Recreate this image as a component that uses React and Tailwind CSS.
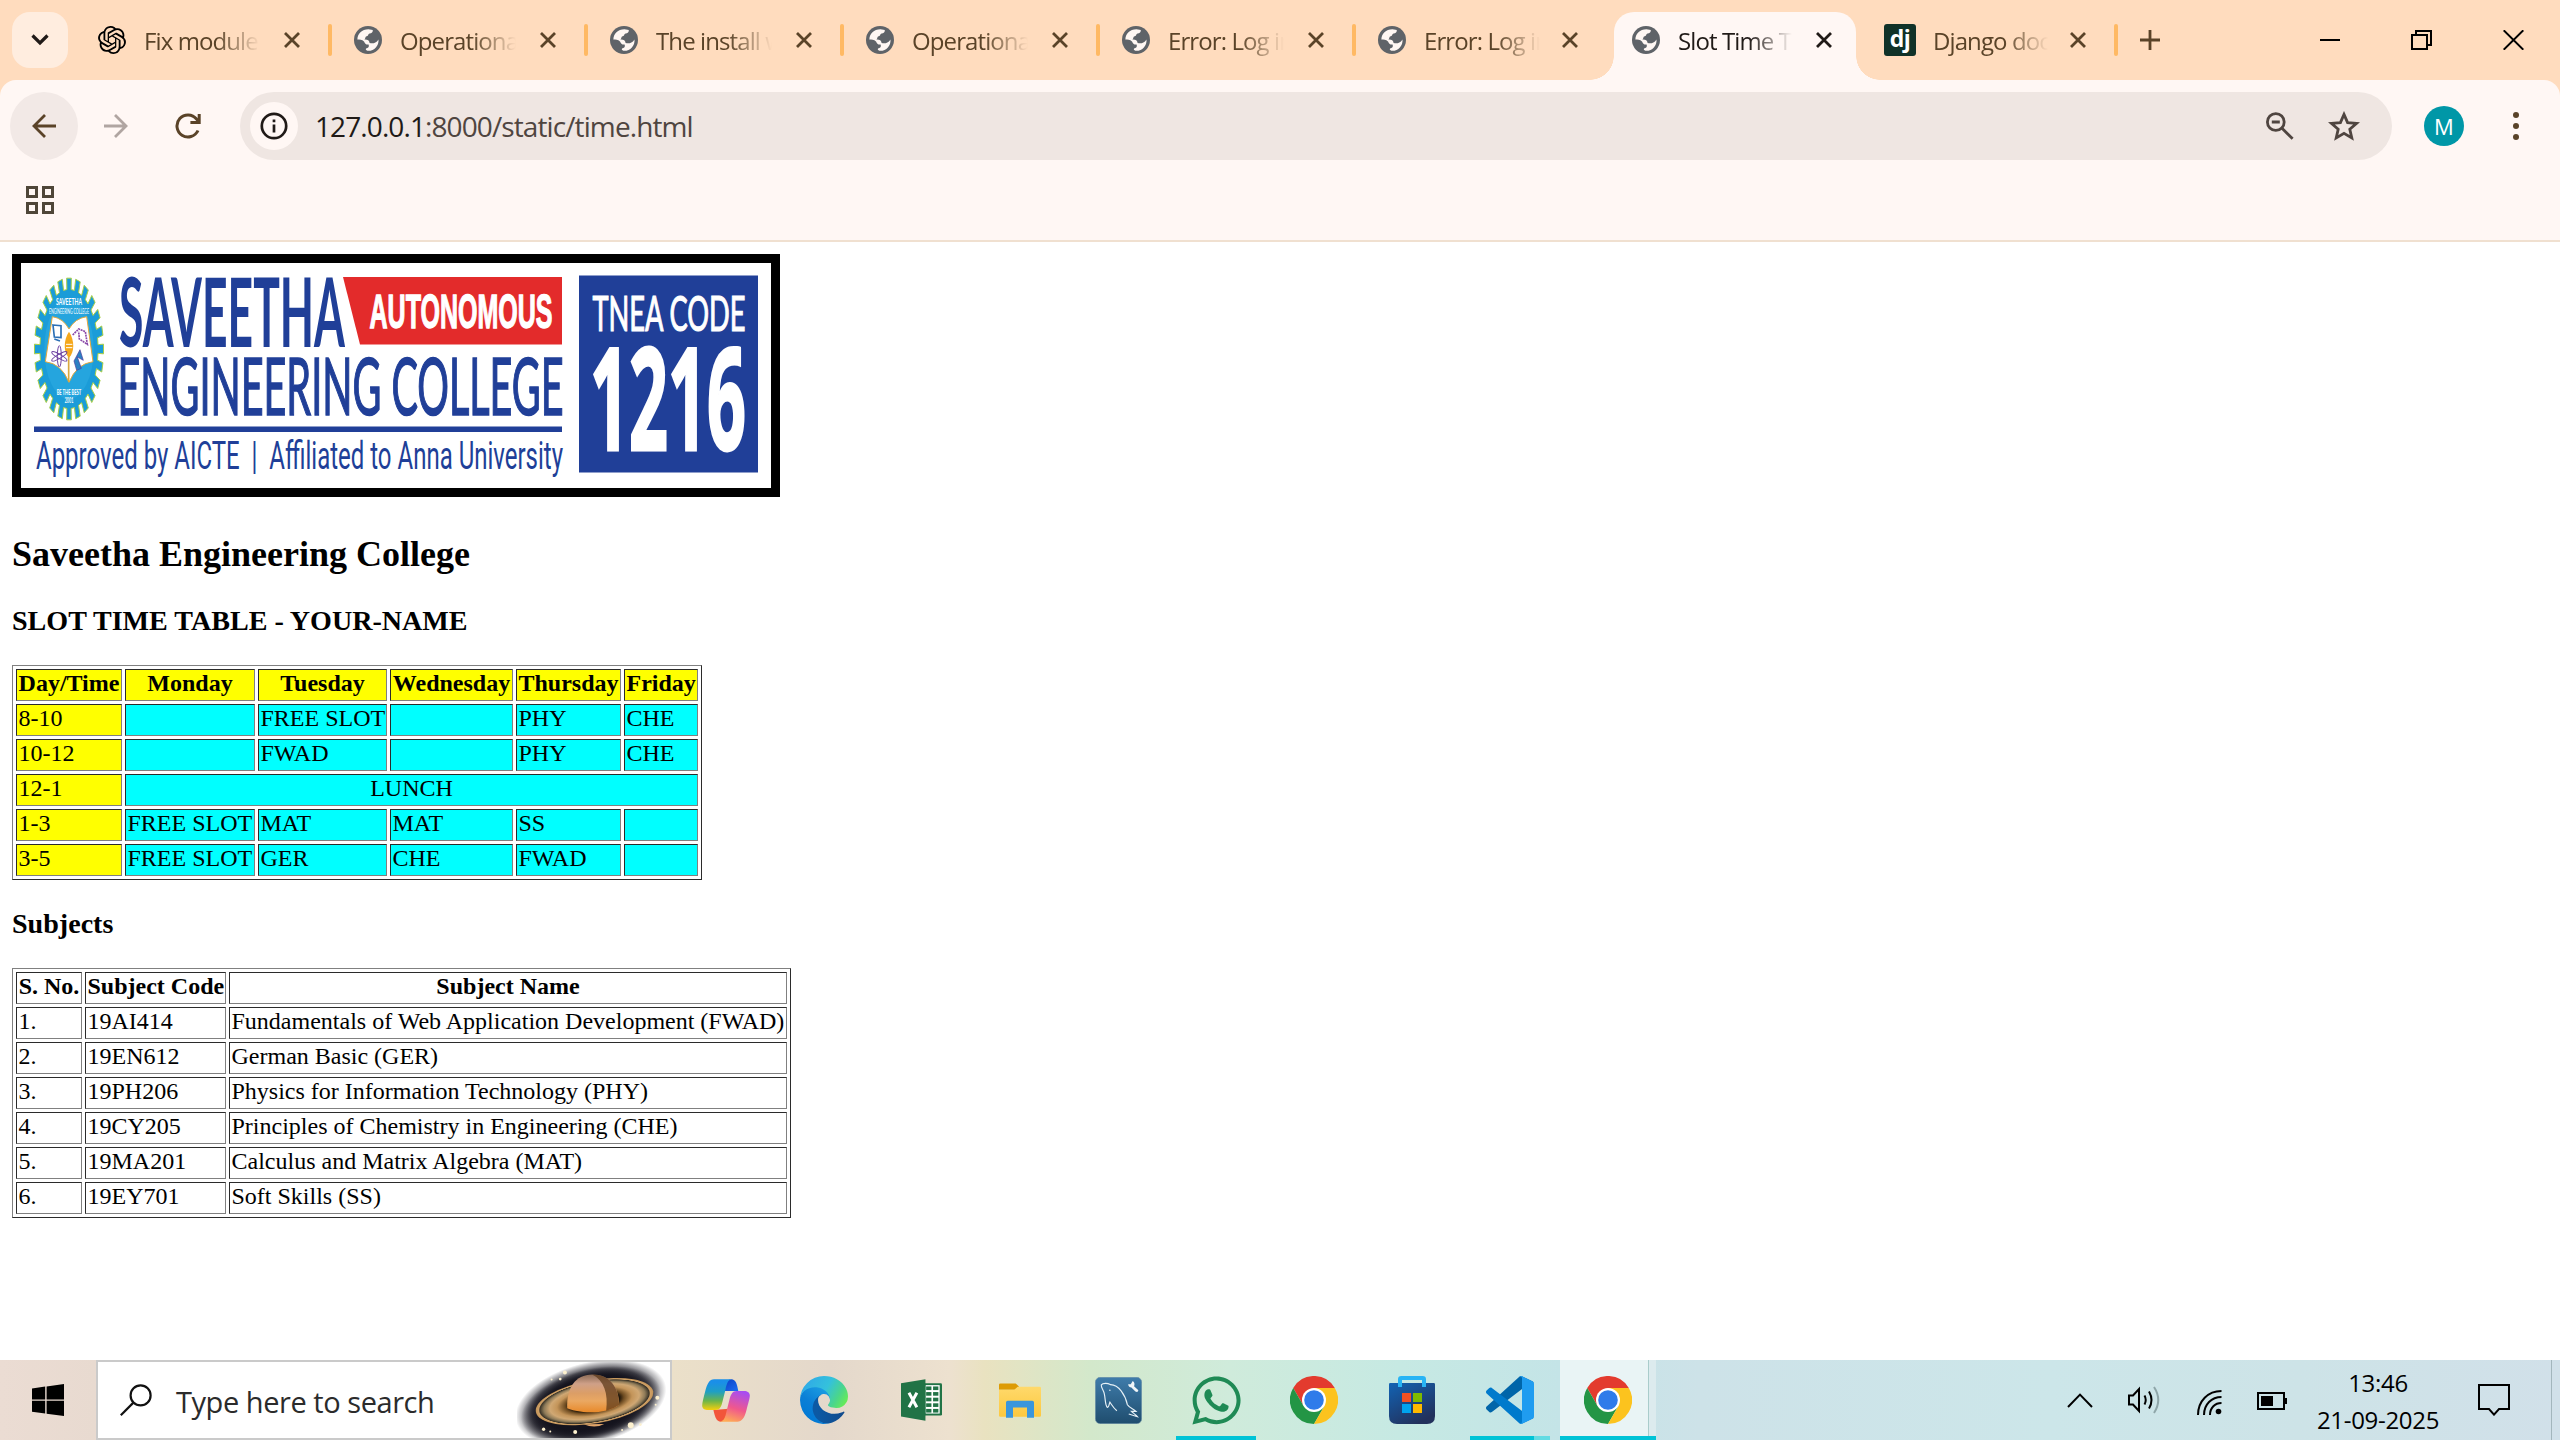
import React from "react";
import { SiOpenai } from "react-icons/si";
import { FaWhatsapp } from "react-icons/fa";

const TABS = [
  { title: "Fix module n", icon: "openai" },
  { title: "Operational", icon: "globe" },
  { title: "The install w", icon: "globe" },
  { title: "Operational", icon: "globe" },
  { title: "Error: Log in", icon: "globe" },
  { title: "Error: Log in", icon: "globe", last: true },
];

const FADE =
  "[mask-image:linear-gradient(to_right,black_62%,transparent_100%)]";

function Globe() {
  return (
    <svg viewBox="0 0 28 28" className="size-7 shrink-0">
      <circle cx="14" cy="14" r="14" fill="#5f6368" />
      <path
        d="M3.4 13.6C3.3 7.6 8.2 3.2 14.6 3.3L18.8 3.9C19 6.4 17.6 7.2 15.6 7.4C14 7.6 14.8 9.6 12.6 10.2C11 10.6 11.6 12.6 10.4 13.4C13.4 13.2 15.4 14.2 15.6 17C18.4 17.6 21.6 17.8 24.5 13.4C25 19.6 20.4 24.8 14.4 24.8C11.4 24.6 11 22.4 13.4 22C15.4 21.2 14.8 19.6 14.6 18.6C11.6 18.8 11 17.2 10 15.4C8 13.8 5.4 13.8 3.4 13.6Z"
        fill="#fff7f3"
      />
    </svg>
  );
}

function Cross({ color = "#5a4328" }) {
  return (
    <svg viewBox="0 0 16 16" className="size-4 shrink-0" stroke={color} strokeWidth="2.8">
      <path d="M1 1L15 15M15 1L1 15" />
    </svg>
  );
}

function TabStrip() {
  return (
    <div className="flex h-20 items-center bg-[#ffdcbe] text-2xl leading-8 tracking-[-0.9px] text-[#5a4328]">
      <div className="ml-3 mr-2 flex size-14 shrink-0 items-center justify-center rounded-[18px] bg-[#ffeddf]">
        <svg viewBox="0 0 18 12" className="h-3 w-[18px]" fill="none" stroke="#201a17" strokeWidth="3.2">
          <path d="M1.5 1.5L9 9L16.5 1.5" />
        </svg>
      </div>
      {TABS.map((t, i) => (
        <div key={i} className="flex h-20 w-64 shrink-0 items-center pl-[22px]">
          {t.icon === "openai" ? <SiOpenai className="size-7 shrink-0 text-black" /> : <Globe />}
          <span className={`ml-[18px] w-[116px] shrink-0 overflow-hidden whitespace-nowrap pt-0.5 ${FADE}`}>{t.title}</span>
          <span className={`flex ${t.last ? "ml-[22px]" : "ml-6"}`}>
            <Cross />
          </span>
          {!t.last && <span className="ml-auto h-8 w-1 rounded-full bg-[#ffb964]" />}
        </div>
      ))}
      <div className="relative ml-0.5 mt-3 flex h-[68px] w-[242px] shrink-0 items-center rounded-t-[20px] bg-[#fff7f4] pb-3 pl-[18px] text-[#201a17]">
        <span className="absolute -left-6 bottom-0 size-6 bg-[radial-gradient(circle_at_0_0,transparent_23.5px,#fff7f4_24px)]" />
        <span className="absolute -right-6 bottom-0 size-6 bg-[radial-gradient(circle_at_100%_0,transparent_23.5px,#fff7f4_24px)]" />
        <Globe />
        <span className={`ml-[18px] w-[114px] shrink-0 overflow-hidden whitespace-nowrap pt-0.5 ${FADE}`}>Slot Time T</span>
        <span className="ml-6 flex">
          <Cross color="#201a17" />
        </span>
      </div>
      <div className="flex h-20 w-[262px] shrink-0 items-center pl-7">
        <span className="flex size-8 shrink-0 items-center justify-center rounded-[3px] bg-[#103228] pb-1 text-[23px] font-bold leading-none tracking-[-0.5px] text-white">dj</span>
        <span className={`ml-[17px] w-[115px] shrink-0 overflow-hidden whitespace-nowrap pt-0.5 ${FADE}`}>Django doc</span>
        <span className="ml-[22px] flex">
          <Cross />
        </span>
        <span className="ml-auto h-8 w-1 rounded-full bg-[#ffb964]" />
      </div>
      <svg viewBox="0 0 20 20" className="ml-[22px] size-5" stroke="#5a4328" strokeWidth="2.8">
        <path d="M10 0V20M0 10H20" />
      </svg>
      <div className="ml-auto mr-9 flex items-center text-black">
        <svg viewBox="0 0 20 20" className="size-5" stroke="currentColor" strokeWidth="2">
          <path d="M0 10H20" />
        </svg>
        <svg viewBox="0 0 21 20" className="ml-[71px] h-5 w-[21px]" fill="none" stroke="currentColor" strokeWidth="2">
          <path d="M1 5H16V19H1ZM5 5V1H20V15H16" />
        </svg>
        <svg viewBox="0 0 21 20" className="ml-[71px] h-5 w-[21px]" stroke="currentColor" strokeWidth="2">
          <path d="M0.7 0.3L20.3 19.7M20.3 0.3L0.7 19.7" />
        </svg>
      </div>
    </div>
  );
}

function Toolbar() {
  return (
    <div className="bg-[#ffdcbe]">
      <div className="h-[162px] rounded-t-2xl border-b-2 border-[#f0e0d0] bg-[#fff7f4]">
        <div className="flex h-[92px] items-center pl-2.5 text-[#5a4328]">
          <div className="flex size-[68px] shrink-0 items-center justify-center rounded-full bg-[#f2e9e6]">
            <svg viewBox="0 0 24 24" className="size-6" fill="none" stroke="currentColor" strokeWidth="2.8">
              <path d="M24 12H2M13 1L2 12L13 23" />
            </svg>
          </div>
          <svg viewBox="0 0 24 24" className="ml-[26px] size-6 text-[#b0a5a1]" fill="none" stroke="currentColor" strokeWidth="2.8">
            <path d="M0 12H22M11 1L22 12L11 23" />
          </svg>
          <svg viewBox="0 0 26 26" className="ml-[47px] size-[26px]" fill="none" stroke="currentColor" strokeWidth="3">
            <path d="M23 17.5A11 11 0 1 1 21.5 6L24 8.8M24.2 1V9.6H15.4" />
          </svg>
          <div className="ml-[39px] flex h-[68px] w-[2152px] shrink-0 items-center rounded-full bg-[#efe6e2] pl-2.5 pr-8 text-[#4f4540]">
            <span className="flex size-12 shrink-0 items-center justify-center rounded-full bg-[#fff7f4]">
              <svg viewBox="0 0 28 28" className="size-7" fill="none" stroke="#201a17" strokeWidth="2.7">
                <circle cx="14" cy="14" r="12.2" />
                <path d="M14 12.6V20.6M14 7.4V10.2" />
              </svg>
            </span>
            <span className="ml-[17px] whitespace-nowrap text-[28px] leading-9 tracking-[-0.9px]">
              <span className="text-[#201a17]">127.0.0.1</span>:8000/static/time.html
            </span>
            <svg viewBox="0 0 28 28" className="ml-auto size-7" fill="none" stroke="currentColor" strokeWidth="2.8">
              <circle cx="9.8" cy="10" r="8.4" />
              <path d="M16 16.2L26.6 26.8M5.8 10H13.8" />
            </svg>
            <svg viewBox="0 0 32 30" className="ml-[34px] h-[30px] w-8" fill="none" stroke="currentColor" strokeWidth="2.8">
              <path d="M16 3.4L19.6 11.6L28.6 12.4L21.8 18.3L23.8 27L16 22.4L8.2 27L10.2 18.3L3.4 12.4L12.4 11.6Z" />
            </svg>
          </div>
          <span className="ml-8 flex size-10 shrink-0 items-center justify-center rounded-full bg-[#0097a7] text-[22px] leading-none text-white">M</span>
          <span className="ml-[49px] flex flex-col gap-[5px]">
            <i className="size-1.5 rounded-full bg-[#5a4328]" />
            <i className="size-1.5 rounded-full bg-[#5a4328]" />
            <i className="size-1.5 rounded-full bg-[#5a4328]" />
          </span>
        </div>
        <div className="ml-[26px] mt-3.5 grid w-7 grid-cols-2 gap-1">
          {[0, 1, 2, 3].map((n) => (
            <span key={n} className="size-3 border-[3px] border-[#4f4638]" />
          ))}
        </div>
      </div>
    </div>
  );
}

/* Cog outline on an ellipse: flat-topped teeth joined by shallow notches. */
function gearPoints(cx, cy, rx, ry, teeth) {
  const pts = [];
  for (let i = 0; i < teeth; i++) {
    const base = (i * 2 * Math.PI) / teeth;
    const step = (2 * Math.PI) / teeth;
    [
      [-0.26, 1],
      [0.26, 1],
      [0.28, 0.84],
      [0.72, 0.84],
    ].forEach(([f, r]) => {
      const a = base + f * step;
      pts.push(`${(cx + Math.sin(a) * rx * r).toFixed(2)},${(cy - Math.cos(a) * ry * r).toFixed(2)}`);
    });
  }
  return pts.join(" ");
}

function CollegeLogo() {
  return (
    <svg viewBox="12 254 768 243" className="block h-[243px] w-[768px]" fontFamily="Lato, sans-serif">
      <rect x="12" y="254" width="768" height="243" fill="#000" />
      <rect x="21" y="263" width="750" height="225" fill="#fff" />
      <polygon points={gearPoints(69, 349, 34.6, 71, 24)} fill="#1b9cd8" stroke="#a9cf46" strokeWidth="1" />
      <g transform="translate(20 265) scale(0.33333)">
        <ellipse cx="147" cy="252" rx="74" ry="150" fill="#25a5de" />
        <path d="M97 155Q130 160 147 192Q165 160 200 155L219 290Q170 296 147 352Q125 296 76 290Z" fill="#fff" stroke="#e9a93a" strokeWidth="3" />
        <path d="M146 250V350" stroke="#d9a83d" strokeWidth="5" />
        <path d="M147 200C130 225 130 262 147 278C164 262 164 225 147 200Z" fill="#f5a81c" />
        <path d="M138 238H157M138 248H157" stroke="#fff" strokeWidth="3" />
        <path d="M99 180L123 182V218L103 216ZM103 222L120 228" fill="none" stroke="#2b6fb5" strokeWidth="5" />
        <path d="M158 210L176 192L196 200L202 238L178 222L176 200" fill="none" stroke="#8a4aa8" strokeWidth="5" strokeDasharray="6 2" />
        <g fill="none" stroke="#6b3fa0" strokeWidth="3">
          <ellipse cx="118" cy="274" rx="6" ry="32" />
          <ellipse cx="118" cy="274" rx="6" ry="26" transform="rotate(60 118 274)" />
          <ellipse cx="118" cy="274" rx="6" ry="26" transform="rotate(-60 118 274)" />
        </g>
        <path d="M162 288L180 254L190 286L172 276L184 310L170 316Z" fill="#2b7fc2" stroke="#4a3a9a" strokeWidth="2" />
        <g fill="#fff" fontWeight="700" textAnchor="middle">
          <text x="147" y="119" fontSize="28" textLength="78" lengthAdjust="spacingAndGlyphs">SAVEETHA</text>
          <text x="147" y="147" fontSize="20" fontWeight="400" textLength="120" lengthAdjust="spacingAndGlyphs">ENGINEERING COLLEGE</text>
          <text x="147" y="391" fontSize="24" textLength="74" lengthAdjust="spacingAndGlyphs">BE THE BEST</text>
          <text x="147" y="415" fontSize="20" textLength="26" lengthAdjust="spacingAndGlyphs">2001</text>
        </g>
      </g>
      <g fill="#203f98">
        <text x="119" y="347" fontSize="96" fontWeight="700" textLength="226" lengthAdjust="spacingAndGlyphs">SAVEETHA</text>
        <text x="117.5" y="415" fontSize="79" fontWeight="400" textLength="446" lengthAdjust="spacingAndGlyphs" stroke="#203f98" strokeWidth="1.6">ENGINEERING COLLEGE</text>
        <rect x="34" y="426.5" width="528" height="5.5" />
        <text x="36" y="468.5" fontSize="38" fontFamily="Roboto, sans-serif" textLength="527" lengthAdjust="spacingAndGlyphs" xmlSpace="preserve">Approved by AICTE&#160; |&#160; Affiliated to Anna University</text>
        <rect x="579" y="275.5" width="179" height="197" />
      </g>
      <polygon points="343,277 562,277 562,344.5 360,344.5" fill="#e32b2b" />
      <g fill="#fff" fontWeight="700">
        <text x="369.5" y="327.5" fontSize="49" fontFamily="Liberation Sans, sans-serif" stroke="#fff" strokeWidth="1.4" textLength="183" lengthAdjust="spacingAndGlyphs">AUTONOMOUS</text>
        <text x="592.5" y="331" fontSize="49" fontWeight="400" stroke="#fff" strokeWidth="1.2" textLength="153" lengthAdjust="spacingAndGlyphs">TNEA CODE</text>
        <text x="590" y="450" fontSize="141" fontFamily="Open Sans, sans-serif" stroke="#fff" strokeWidth="3" textLength="156" lengthAdjust="spacingAndGlyphs">1216</text>
      </g>
    </svg>
  );
}

const CELL = "border border-t-[#2b2b2b] border-l-[#2b2b2b] border-b-[#808080] border-r-[#808080] px-[1.5px] py-0 h-8 whitespace-nowrap leading-[27px] align-top";
const TABLE = "table-fixed border-separate border-spacing-[3px] border border-t-[#808080] border-l-[#808080] border-b-[#2b2b2b] border-r-[#2b2b2b]";

const DAYS = ["Monday", "Tuesday", "Wednesday", "Thursday", "Friday"];
const SLOTS = [
  ["8-10", "", "FREE SLOT", "", "PHY", "CHE"],
  ["10-12", "", "FWAD", "", "PHY", "CHE"],
  ["12-1", "LUNCH"],
  ["1-3", "FREE SLOT", "MAT", "MAT", "SS", ""],
  ["3-5", "FREE SLOT", "GER", "CHE", "FWAD", ""],
];
const SUBJECTS = [
  ["19AI414", "Fundamentals of Web Application Development (FWAD)"],
  ["19EN612", "German Basic (GER)"],
  ["19PH206", "Physics for Information Technology (PHY)"],
  ["19CY205", "Principles of Chemistry in Engineering (CHE)"],
  ["19MA201", "Calculus and Matrix Algebra (MAT)"],
  ["19EY701", "Soft Skills (SS)"],
];

function Page() {
  return (
    <main className="h-[1118px] bg-white pl-3 pt-3 font-['Liberation_Serif',serif] text-2xl text-black">
      <CollegeLogo />
      <h2 className="mt-[37px] h-[41px] text-[36px] font-bold leading-[41px]">Saveetha Engineering College</h2>
      <h3 className="mt-[30px] h-8 text-[28.08px] font-bold leading-8">SLOT TIME TABLE - YOUR-NAME</h3>
      <table className={`mt-7 w-[690px] ${TABLE}`}>
        <colgroup>
          <col className="w-[106px]" />
          <col className="w-[130px]" />
          <col className="w-[129px]" />
          <col className="w-[123px]" />
          <col className="w-[105px]" />
          <col className="w-[74px]" />
        </colgroup>
        <tbody>
          <tr>
            {["Day/Time", ...DAYS].map((d) => (
              <th key={d} className={`${CELL} bg-[#ffff00] text-center font-bold`}>{d}</th>
            ))}
          </tr>
          {SLOTS.map(([time, ...cells]) => (
            <tr key={time}>
              <td className={`${CELL} bg-[#ffff00]`}>{time}</td>
              {cells.map((c, i) => (
                <td key={i} colSpan={cells.length === 1 ? 5 : 1} className={`${CELL} bg-[#00ffff] ${cells.length === 1 ? "text-center" : ""}`}>{c}</td>
              ))}
            </tr>
          ))}
        </tbody>
      </table>
      <h3 className="mt-7 h-8 text-[28.08px] font-bold leading-8">Subjects</h3>
      <table className={`mt-7 w-[779px] ${TABLE}`}>
        <colgroup>
          <col className="w-[66px]" />
          <col className="w-[141px]" />
          <col className="w-[558px]" />
        </colgroup>
        <tbody>
          <tr>
            {["S. No.", "Subject Code", "Subject Name"].map((h) => (
              <th key={h} className={`${CELL} text-center font-bold`}>{h}</th>
            ))}
          </tr>
          {SUBJECTS.map(([code, name], i) => (
            <tr key={code}>
              <td className={CELL}>{i + 1}.</td>
              <td className={CELL}>{code}</td>
              <td className={CELL}>{name}</td>
            </tr>
          ))}
        </tbody>
      </table>
    </main>
  );
}

function Planet() {
  return (
    <svg viewBox="50 21 460 228" className="h-[76px] w-[153px]">
      <defs>
        <radialGradient id="sky">
          <stop offset="0.62" stopColor="#14131d" />
          <stop offset="0.78" stopColor="#14131d" stopOpacity="0.75" />
          <stop offset="1" stopColor="#14131d" stopOpacity="0" />
        </radialGradient>
        <radialGradient id="ring">
          <stop offset="0.42" stopColor="#1a1208" />
          <stop offset="0.5" stopColor="#6e4c22" />
          <stop offset="0.64" stopColor="#c4955a" />
          <stop offset="0.76" stopColor="#d0a874" />
          <stop offset="0.86" stopColor="#8d7a58" />
          <stop offset="0.93" stopColor="#3a3428" />
          <stop offset="0.95" stopColor="#cfa066" />
          <stop offset="1" stopColor="#c39458" />
        </radialGradient>
        <linearGradient id="body" x1="0" y1="0" x2="0" y2="1">
          <stop offset="0" stopColor="#8a6a55" />
          <stop offset="0.25" stopColor="#cfa088" />
          <stop offset="0.5" stopColor="#dc9e66" />
          <stop offset="0.7" stopColor="#eaa862" />
          <stop offset="1" stopColor="#e8892a" />
        </linearGradient>
      </defs>
      <ellipse cx="272" cy="144" rx="232" ry="122" fill="url(#sky)" transform="rotate(-14 272 144)" />
      <ellipse cx="272" cy="150" rx="215" ry="108" fill="url(#sky)" transform="rotate(-14 272 150)" />
      <path d="M250 208Q285 222 312 207Z" fill="#e0a56a" />
      <ellipse cx="283" cy="140" rx="179" ry="65" fill="url(#ring)" transform="rotate(-10 283 140)" />
      <path d="M201 160C198 100 225 58 276 58C330 58 357 98 357 150C320 180 230 175 201 160Z" fill="url(#body)" />
      <path d="M276 58C312 76 325 115 318 167Q340 162 357 150C357 98 330 58 276 58Z" fill="#5a3717" opacity="0.72" />
      <g fill="#fdf1cf">
        <circle cx="194" cy="52" r="6" />
        <circle cx="180" cy="72" r="4" />
        <circle cx="154" cy="73" r="3" />
        <circle cx="472" cy="128" r="6" />
        <circle cx="467" cy="149" r="3" />
        <circle cx="392" cy="211" r="9" />
        <circle cx="421" cy="209" r="4" />
        <circle cx="366" cy="225" r="3" />
        <circle cx="225" cy="231" r="6" />
        <circle cx="130" cy="223" r="5" />
        <circle cx="150" cy="230" r="3" />
      </g>
    </svg>
  );
}

function Copilot() {
  return (
    <svg viewBox="0 0 144 130" className="h-[43px] w-12">
      <defs>
        <linearGradient id="cpA" x1="0" y1="0" x2="0" y2="1">
          <stop offset="0.1" stopColor="#1a8fe8" />
          <stop offset="0.4" stopColor="#1f9fc4" />
          <stop offset="0.7" stopColor="#6bb54a" />
          <stop offset="1" stopColor="#f8cf0c" />
        </linearGradient>
        <linearGradient id="cpB" x1="0.6" y1="0" x2="0.3" y2="1">
          <stop offset="0" stopColor="#a94df0" />
          <stop offset="0.55" stopColor="#f0588c" />
          <stop offset="1" stopColor="#ffab55" />
        </linearGradient>
        <linearGradient id="cpC" x1="0" y1="0" x2="1" y2="1">
          <stop offset="0" stopColor="#0c3fc4" />
          <stop offset="1" stopColor="#1d6df0" />
        </linearGradient>
      </defs>
      <path d="M64 36C70 12 74 1 88 1C102 1 105 16 109 36Z" fill="url(#cpC)" />
      <path d="M34 94C38 112 42 129 55 129C68 129 74 112 80 90Z" fill="#f2553a" />
      <path d="M90 1H36C22 1 15 14 9 38C4 58 0 72 0 80C0 90 8 94 18 94H40C54 94 58 84 62 66L70 34C74 14 78 2 90 1Z" fill="url(#cpA)" />
      <path d="M54 129H106C120 129 128 118 134 94C140 70 144 58 144 50C144 41 137 36 127 36H104C92 36 86 46 82 64L74 96C70 116 66 127 54 129Z" fill="url(#cpB)" />
    </svg>
  );
}

function Edge() {
  return (
    <svg viewBox="0 0 256 256" className="size-12">
      <defs>
        <linearGradient id="edA" x1="0.2" y1="0.5" x2="1" y2="0.5">
          <stop offset="0" stopColor="#0c59a4" />
          <stop offset="1" stopColor="#114a8b" />
        </linearGradient>
        <linearGradient id="edB" x1="0.8" y1="0.1" x2="0.3" y2="1">
          <stop offset="0" stopColor="#1b9de2" />
          <stop offset="0.5" stopColor="#0b7fd6" />
          <stop offset="1" stopColor="#0078d4" />
        </linearGradient>
        <linearGradient id="edC" x1="0" y1="0.3" x2="1" y2="0.7">
          <stop offset="0" stopColor="#2fa8e8" />
          <stop offset="0.5" stopColor="#34c1dc" />
          <stop offset="0.8" stopColor="#4bd68a" />
          <stop offset="1" stopColor="#66eb58" />
        </linearGradient>
      </defs>
      <g transform="translate(-4.63 -4.92)">
        <path fill="url(#edA)" d="M235.68 195.46a93.73 93.73 0 0 1-10.54 4.71 101.87 101.87 0 0 1-35.9 6.46c-47.32 0-88.54-32.55-88.54-74.32A31.48 31.48 0 0 1 117.13 105c-42.8 1.8-53.8 46.4-53.8 72.53 0 73.88 68.09 81.37 82.76 81.37 7.91 0 19.84-2.3 27-4.56l1.31-.44a128.34 128.34 0 0 0 66.6-52.8 4 4 0 0 0-5.32-5.64Z" />
        <path fill="url(#edB)" d="M110.34 246.34A79.2 79.2 0 0 1 87.6 225a80.72 80.72 0 0 1 29.53-120c3.12-1.47 8.45-4.13 15.54-4a32.35 32.35 0 0 1 25.69 13 31.88 31.88 0 0 1 6.36 18.66c0-.21 24.46-79.6-80-79.6-43.9 0-80 41.66-80 78.21a130.15 130.15 0 0 0 12.11 56 128 128 0 0 0 156.38 67.11 75.55 75.55 0 0 1-62.78-8Z" />
        <path fill="url(#edC)" d="M156.94 153.78c-.81 1.05-3.3 2.5-3.3 5.66 0 2.61 1.7 5.12 4.72 7.23 14.38 10 41.49 8.68 41.56 8.68a59.56 59.56 0 0 0 30.27-8.35 61.38 61.38 0 0 0 30.43-52.88c.26-22.41-8-37.31-11.34-43.91C228.09 28.76 182.35 4.92 132.61 4.92a128 128 0 0 0-128 126.2c.48-36.54 36.8-66.05 80-66.05 3.5 0 23.46.34 42 10.07 16.34 8.58 24.9 18.94 30.85 29.21 6.18 10.67 7.28 24.15 7.28 29.52s-2.74 13.33-7.8 19.91Z" />
      </g>
    </svg>
  );
}

function Excel() {
  return (
    <svg viewBox="0 0 124 126" className="h-[42px] w-[41px]">
      <rect x="66" y="12" width="58" height="98" rx="4" fill="#217346" />
      <rect x="74" y="18" width="43" height="86" fill="#fff" />
      <g fill="#217346">
        {[22, 39, 56, 73, 90].map((y) => (
          <React.Fragment key={y}>
            <rect x="76" y={y} width="16" height="11" />
            <rect x="97" y={y} width="16" height="11" />
          </React.Fragment>
        ))}
      </g>
      <path d="M0 12L74 0V126L0 113Z" fill="#217346" />
      <path d="M24 41L48 85M48 41L24 85" stroke="#fff" strokeWidth="9" />
    </svg>
  );
}

function Explorer() {
  return (
    <svg viewBox="0 0 126 104" className="h-[35px] w-[42px]">
      <defs>
        <linearGradient id="fold" x1="0" y1="0" x2="0" y2="1">
          <stop offset="0" stopColor="#ffd96b" />
          <stop offset="1" stopColor="#fcc83f" />
        </linearGradient>
      </defs>
      <path d="M0 5Q0 1 4 1H50L60 10L52 20H0Z" fill="#dd9b05" />
      <path d="M0 20H46L56 11H122Q126 11 126 15V97Q126 101 122 101H4Q0 101 0 97Z" fill="url(#fold)" />
      <path d="M21 104V58Q21 53 26 53H100Q105 53 105 58V104H84V73H42V104Z" fill="#3a96dd" />
    </svg>
  );
}

function Workbench() {
  return (
    <svg viewBox="0 0 142 142" className="size-[47px]">
      <defs>
        <linearGradient id="wb" x1="0" y1="0" x2="0" y2="1">
          <stop offset="0" stopColor="#3f7cab" />
          <stop offset="1" stopColor="#1f4d6e" />
        </linearGradient>
      </defs>
      <rect x="1" y="1" width="140" height="140" rx="15" fill="url(#wb)" stroke="#6f93a8" strokeWidth="2" />
      <g fill="none" stroke="#e6f0f6" strokeWidth="3.5">
        <path d="M98 84C92 56 72 22 46 23C38 18 24 18 19 24C18 32 26 40 28 50C32 66 30 88 38 92C42 92 42 84 45 76C52 86 56 94 66 102" />
        <path d="M98 84C104 94 116 96 124 104L110 104C116 110 122 112 128 120L102 112" />
      </g>
      <circle cx="45" cy="40" r="2" fill="#fff" />
      <path d="M100 22L108 22L114 12Q122 18 118 28L131 40Q130 48 122 44L110 32Q102 32 100 22Z" fill="#f0f5f8" />
    </svg>
  );
}

function Chrome() {
  return (
    <svg viewBox="0 0 48 48" className="size-12">
      <path d="M24 24L3.2 12A24 24 0 0 1 44.8 12Z" fill="#e33b2e" />
      <path d="M3.2 12L13.6 30L24 24V12Z" fill="#e33b2e" />
      <path d="M3.2 12A24 24 0 0 0 24 48L34.4 30H13.6Z" fill="#239545" />
      <path d="M24 12H44.8A24 24 0 0 1 24 48L34.4 30Z" fill="#fcc31e" />
      <circle cx="24" cy="24" r="12" fill="#fff" />
      <circle cx="24" cy="24" r="9.8" fill="#2f7bea" />
    </svg>
  );
}

function Store() {
  return (
    <svg viewBox="0 0 138 144" className="h-12 w-[46px]">
      <defs>
        <linearGradient id="bag" x1="0" y1="0" x2="0.6" y2="1">
          <stop offset="0" stopColor="#1263b4" />
          <stop offset="1" stopColor="#22315c" />
        </linearGradient>
      </defs>
      <path d="M0 25Q0 21 4 21H134Q138 21 138 25V120Q138 144 114 144H24Q0 144 0 120Z" fill="url(#bag)" />
      <path d="M33 33V10Q33 6 37 6H101Q105 6 105 10V33" fill="none" stroke="#27b4f5" strokeWidth="12" />
      <rect x="39" y="51" width="27" height="27" fill="#f25022" />
      <rect x="72" y="51" width="27" height="27" fill="#7fba00" />
      <rect x="39" y="84" width="27" height="27" fill="#00a4ef" />
      <rect x="72" y="84" width="27" height="27" fill="#ffb900" />
    </svg>
  );
}

function Code() {
  return (
    <svg viewBox="0 0 100 100" className="size-12">
      <path d="M96.5 10.8L75.9 0.9C73.5 -0.3 70.7 0.2 68.8 2.1L1.3 63.6C-0.5 65.3 -0.5 68.2 1.3 69.8L6.8 74.8C8.3 76.2 10.6 76.3 12.2 75L93.4 13.4C96.1 11.3 100 13.3 100 16.7V16.4C100 14 98.6 11.8 96.5 10.8Z" fill="#0065a9" />
      <path d="M96.5 89.2L75.9 99.1C73.5 100.3 70.7 99.8 68.8 97.9L1.3 36.4C-0.5 34.7 -0.5 31.8 1.3 30.2L6.8 25.2C8.3 23.8 10.6 23.7 12.2 25L93.4 86.6C96.1 88.7 100 86.7 100 83.3V83.6C100 86 98.6 88.2 96.5 89.2Z" fill="#007acc" />
      <path d="M75.9 99.1C73.5 100.3 70.7 99.8 68.8 97.9C71.1 100.2 75 98.6 75 95.3V4.7C75 1.4 71.1 -0.2 68.8 2.1C70.7 0.2 73.5 -0.3 75.9 0.9L96.5 10.8C98.6 11.8 100 14 100 16.4V83.6C100 86 98.6 88.2 96.5 89.2Z" fill="#1f9cf0" />
    </svg>
  );
}

function Slot({ children, className = "" }) {
  return <div className={`flex h-20 w-[98px] shrink-0 items-center justify-center ${className}`}>{children}</div>;
}

function Taskbar() {
  return (
    <footer className="flex h-20 items-center bg-[linear-gradient(90deg,#ebdcd3_0px,#e8dad0_96px,#ebe0c9_672px,#e4d8cb_830px,#ede1cf_950px,#e9e2c0_985px,#d3e8cb_1090px,#cfebdb_1230px,#c6e9e3_1400px,#c4e4e7_1560px,#cde2e8_1700px,#cce6e9_2050px,#cde3e7_2300px,#d1e0e9_2560px)] text-black">
      <svg viewBox="0 0 32 32" className="ml-8 size-8 shrink-0">
        <path d="M0 4.4L13.2 2.6V15.4H0ZM14.6 2.4L32 0V15.4H14.6ZM0 16.8H13.2V29.6L0 27.8ZM14.6 16.8H32V32L14.6 29.7Z" />
      </svg>
      <div className="ml-8 flex h-20 w-[576px] shrink-0 items-center border-2 border-[#cacaca] bg-white pl-[22px]">
        <svg viewBox="0 0 32 32" className="size-8 shrink-0" fill="none" stroke="#111" strokeWidth="2.2">
          <circle cx="20.6" cy="11.4" r="10" />
          <path d="M13.4 18.6L0.8 31.2" />
        </svg>
        <span className="ml-6 whitespace-nowrap pt-1 text-[29px] leading-9 tracking-[-0.45px] text-[#2b2b2b]">Type here to search</span>
        <span className="ml-auto flex">
          <Planet />
        </span>
      </div>
      <div className="ml-[5px] flex">
        <Slot><Copilot /></Slot>
        <Slot><Edge /></Slot>
        <Slot className="pr-0.5"><Excel /></Slot>
        <Slot><Explorer /></Slot>
        <Slot><Workbench /></Slot>
        <Slot className="relative">
          <FaWhatsapp className="size-[55px] text-[#1f8a55]" />
          <span className="absolute bottom-0 left-[9px] h-1 w-20 bg-[#00c3d6]" />
        </Slot>
        <Slot><Chrome /></Slot>
        <Slot><Store /></Slot>
        <Slot className="relative">
          <Code />
          <span className="absolute bottom-0 left-[9px] h-1 w-16 bg-[#00c3d6]" />
          <span className="absolute bottom-0 left-[73px] h-1 w-4 bg-[#63dbe3]" />
        </Slot>
        <div className="ml-px flex h-20 w-24 flex-col">
          <div className="flex h-[76px]">
            <div className="flex w-[89px] items-center justify-center border-r border-[#a9cccb] bg-[#e9f4f5] pl-2 pt-1"><Chrome /></div>
            <div className="w-[7px] bg-[#dcebee]" />
          </div>
          <div className="h-1 bg-[#00c3d6]" />
        </div>
      </div>
      <div className="ml-auto flex h-20 items-center">
        <svg viewBox="0 0 26 15" className="h-[15px] w-[26px]" fill="none" stroke="currentColor" strokeWidth="2">
          <path d="M1 14L13 1.6L25 14" />
        </svg>
        <svg viewBox="0 0 33 28" className="ml-[35px] h-7 w-[33px]" fill="none" stroke="currentColor" strokeWidth="2">
          <path d="M1 9.5H5L11 3V25L5 18.5H1Z" />
          <path d="M16.5 9.5Q19 14 16.5 18.5M21 5.5Q26 14 21 22.5" />
          <path d="M26 1Q34.5 14 26 27" stroke="#8fa6a9" />
        </svg>
        <svg viewBox="0 0 25 25" className="ml-[36px] mt-1 size-[25px]" fill="none" stroke="currentColor" strokeWidth="2">
          <path d="M1 25C1 11 11 1 24.5 1M7 25C7 14.5 14.5 7 24.5 7M13 25C13 17.5 18 13 24.5 13" />
          <circle cx="21.5" cy="21.5" r="2.8" fill="currentColor" stroke="none" />
        </svg>
        <svg viewBox="0 0 30 18" className="ml-[35px] mt-0.5 h-[18px] w-[30px]">
          <path d="M1 1H27V17H1Z" fill="none" stroke="currentColor" strokeWidth="2" />
          <path d="M4 4H16V14H4ZM28 6H30V12H28Z" />
        </svg>
        <div className="ml-[21px] flex w-[140px] flex-col items-center pt-0.5 text-center text-[24px] leading-[37px] tracking-[-0.3px]">
          <span>13:46</span>
          <span>21-09-2025</span>
        </div>
        <svg viewBox="0 0 32 32" className="ml-[30px] size-8" fill="none" stroke="currentColor" strokeWidth="2">
          <path d="M1 1H31V25H21L16 30.6L11 25H1Z" />
        </svg>
        <span className="ml-[41px] mr-2 h-20 w-px bg-[#a3b6bd]" />
      </div>
    </footer>
  );
}

export default function App() {
  return (
    <div className="flex h-[1440px] w-[2560px] flex-col overflow-hidden bg-white font-['Open_Sans','Noto_Sans',sans-serif]">
      <TabStrip />
      <Toolbar />
      <Page />
      <Taskbar />
    </div>
  );
}
